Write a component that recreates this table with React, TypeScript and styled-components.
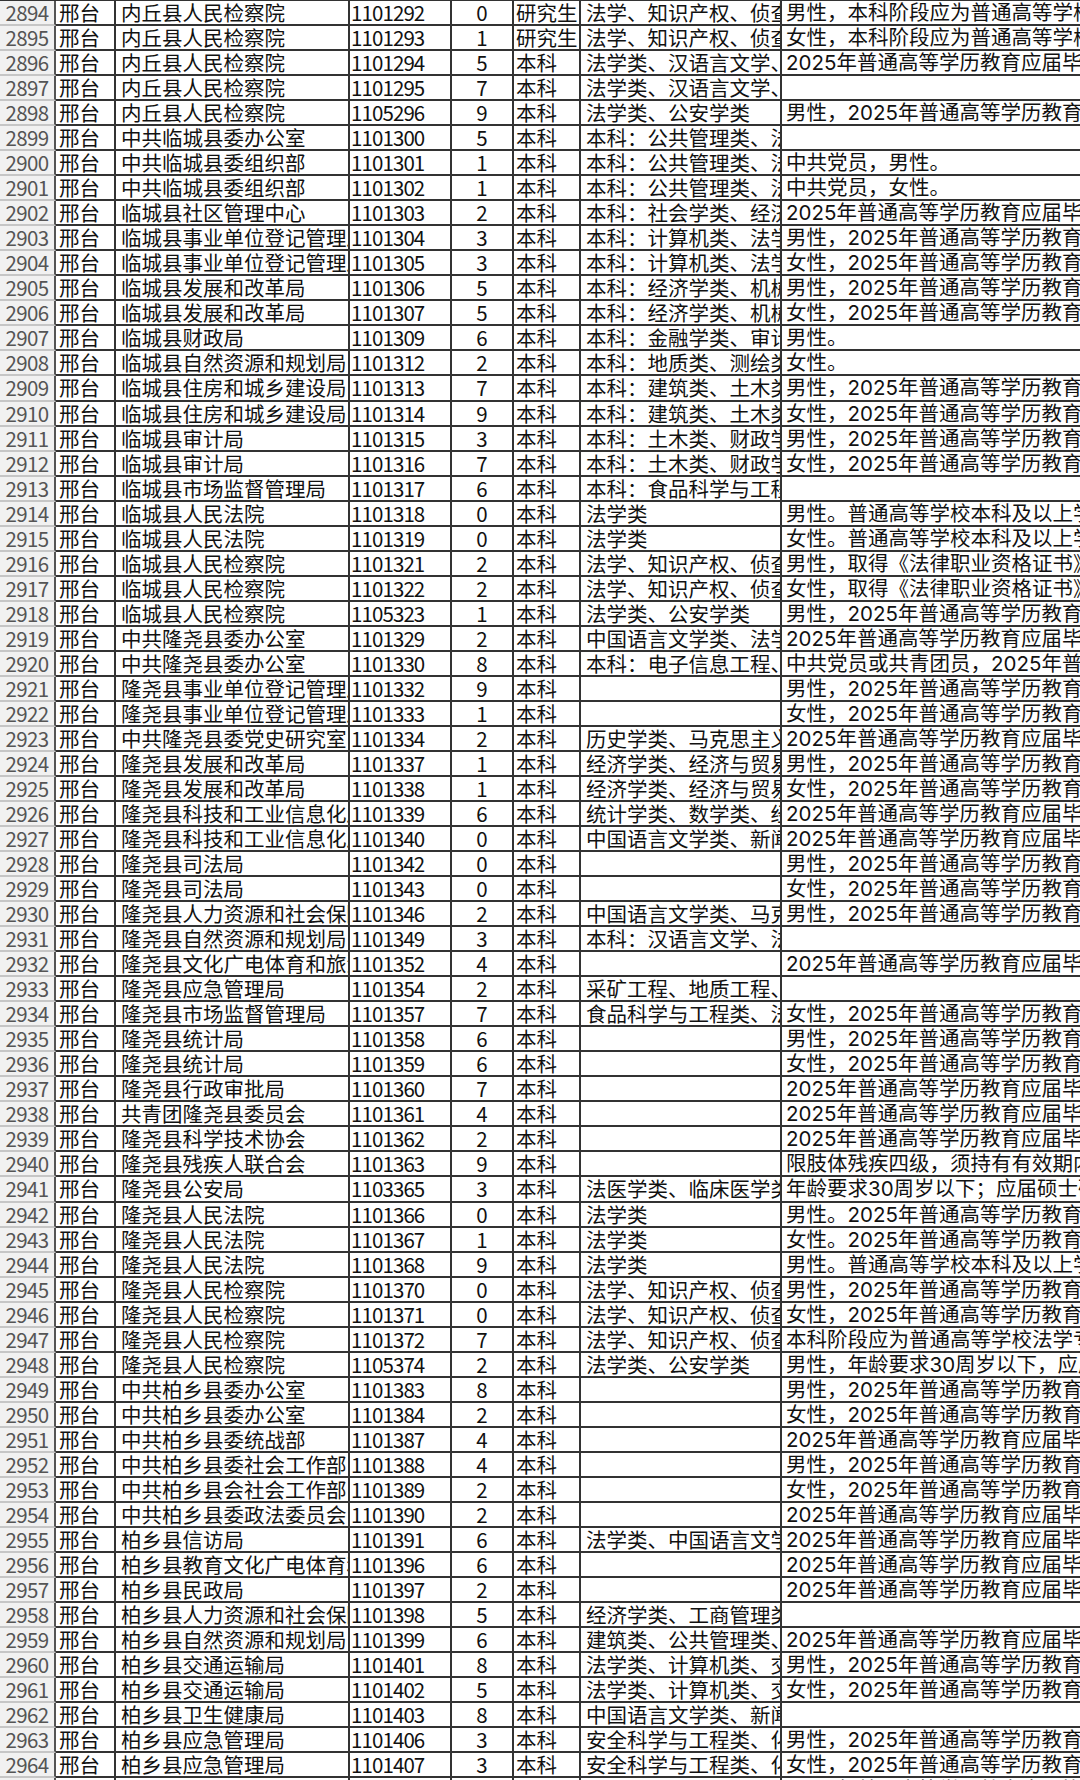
import React from 'react';
import styled, { createGlobalStyle } from 'styled-components';

const GlobalStyle = createGlobalStyle`
  html, body {
    margin: 0;
    padding: 0;
    background: #fff;
  }
  body {
    font-family: "Noto Sans CJK SC", "Noto Sans", sans-serif;
    overflow: hidden;
  }
`;

const Sheet = styled.div`
  width: 1080px;
  height: 1780px;
  overflow: hidden;
  border-top: 1px solid #333;
  box-sizing: border-box;
`;

const Row = styled.div`
  display: grid;
  grid-template-columns: 56px 60px 234px 102px 62px 67px 201px 440px;
  height: 25.04px;
`;

const Cell = styled.div<{ $align?: 'left' | 'center'; $pad?: number; $latin?: boolean; $tight?: boolean }>`
  box-sizing: border-box;
  border-right: 2px solid #333;
  border-bottom: 2px solid #333;
  overflow: hidden;
  white-space: nowrap;
  font-family: ${(p) => (p.$latin ? 'Inter, "Noto Sans CJK SC", sans-serif' : 'inherit')};
  font-size: 20.5px;
  line-height: 23px;
  color: #111;
  text-align: ${(p) => p.$align || 'left'};
  padding-left: ${(p) => (p.$pad ?? 4)}px;
  letter-spacing: ${(p) => (p.$tight ? '-0.9px' : '0')};
`;

const RowHead = styled.div`
  box-sizing: border-box;
  background: #f1f1f1;
  border-right: 2px solid #555;
  border-bottom: 2px solid #c6c6c6;
  color: #555;
  font-size: 20.5px;
  line-height: 23px;
  text-align: center;
  letter-spacing: -0.6px;
  overflow: hidden;
  white-space: nowrap;
`;

interface Job {
  no: number;
  dept: string;
  code: string;
  count: string;
  edu: string;
  major: string;
  note: string;
}

const M = '男性，2025年普通高等学历教育应届毕业生';
const F = '女性，2025年普通高等学历教育应届毕业生';
const G = '2025年普通高等学历教育应届毕业生';

const jf = '法学、知识产权、侦查学类';

const raw: [string, string, string, string, string, string][] = [
  ['内丘县人民检察院', '1101292', '0', '研究生', jf, '男性，本科阶段应为普通高等学校法学'],
  ['内丘县人民检察院', '1101293', '1', '研究生', jf, '女性，本科阶段应为普通高等学校法学'],
  ['内丘县人民检察院', '1101294', '5', '本科', '法学类、汉语言文学、新闻学', G],
  ['内丘县人民检察院', '1101295', '7', '本科', '法学类、汉语言文学、新闻学', ''],
  ['内丘县人民检察院', '1105296', '9', '本科', '法学类、公安学类', M],
  ['中共临城县委办公室', '1101300', '5', '本科', '本科：公共管理类、法学类', ''],
  ['中共临城县委组织部', '1101301', '1', '本科', '本科：公共管理类、法学类', '中共党员，男性。'],
  ['中共临城县委组织部', '1101302', '1', '本科', '本科：公共管理类、法学类', '中共党员，女性。'],
  ['临城县社区管理中心', '1101303', '2', '本科', '本科：社会学类、经济学类', G],
  ['临城县事业单位登记管理局', '1101304', '3', '本科', '本科：计算机类、法学类', M],
  ['临城县事业单位登记管理局', '1101305', '3', '本科', '本科：计算机类、法学类', F],
  ['临城县发展和改革局', '1101306', '5', '本科', '本科：经济学类、机械类', M],
  ['临城县发展和改革局', '1101307', '5', '本科', '本科：经济学类、机械类', F],
  ['临城县财政局', '1101309', '6', '本科', '本科：金融学类、审计学类', '男性。'],
  ['临城县自然资源和规划局', '1101312', '2', '本科', '本科：地质类、测绘类', '女性。'],
  ['临城县住房和城乡建设局', '1101313', '7', '本科', '本科：建筑类、土木类', M],
  ['临城县住房和城乡建设局', '1101314', '9', '本科', '本科：建筑类、土木类', F],
  ['临城县审计局', '1101315', '3', '本科', '本科：土木类、财政学类', M],
  ['临城县审计局', '1101316', '7', '本科', '本科：土木类、财政学类', F],
  ['临城县市场监督管理局', '1101317', '6', '本科', '本科：食品科学与工程类', ''],
  ['临城县人民法院', '1101318', '0', '本科', '法学类', '男性。普通高等学校本科及以上学历'],
  ['临城县人民法院', '1101319', '0', '本科', '法学类', '女性。普通高等学校本科及以上学历'],
  ['临城县人民检察院', '1101321', '2', '本科', jf, '男性，取得《法律职业资格证书》'],
  ['临城县人民检察院', '1101322', '2', '本科', jf, '女性，取得《法律职业资格证书》'],
  ['临城县人民检察院', '1105323', '1', '本科', '法学类、公安学类', M],
  ['中共隆尧县委办公室', '1101329', '2', '本科', '中国语言文学类、法学类', G],
  ['中共隆尧县委办公室', '1101330', '8', '本科', '本科：电子信息工程、计算机', '中共党员或共青团员，2025年普通高等'],
  ['隆尧县事业单位登记管理局', '1101332', '9', '本科', '', M],
  ['隆尧县事业单位登记管理局', '1101333', '1', '本科', '', F],
  ['中共隆尧县委党史研究室', '1101334', '2', '本科', '历史学类、马克思主义理论类', G],
  ['隆尧县发展和改革局', '1101337', '1', '本科', '经济学类、经济与贸易类', M],
  ['隆尧县发展和改革局', '1101338', '1', '本科', '经济学类、经济与贸易类', F],
  ['隆尧县科技和工业信息化局', '1101339', '6', '本科', '统计学类、数学类、经济学类', G],
  ['隆尧县科技和工业信息化局', '1101340', '0', '本科', '中国语言文学类、新闻传播学类', G],
  ['隆尧县司法局', '1101342', '0', '本科', '', M],
  ['隆尧县司法局', '1101343', '0', '本科', '', F],
  ['隆尧县人力资源和社会保障局', '1101346', '2', '本科', '中国语言文学类、马克思主义', M],
  ['隆尧县自然资源和规划局', '1101349', '3', '本科', '本科：汉语言文学、法学', ''],
  ['隆尧县文化广电体育和旅游局', '1101352', '4', '本科', '', G],
  ['隆尧县应急管理局', '1101354', '2', '本科', '采矿工程、地质工程、安全工程', ''],
  ['隆尧县市场监督管理局', '1101357', '7', '本科', '食品科学与工程类、法学类', F],
  ['隆尧县统计局', '1101358', '6', '本科', '', M],
  ['隆尧县统计局', '1101359', '6', '本科', '', F],
  ['隆尧县行政审批局', '1101360', '7', '本科', '', G],
  ['共青团隆尧县委员会', '1101361', '4', '本科', '', G],
  ['隆尧县科学技术协会', '1101362', '2', '本科', '', G],
  ['隆尧县残疾人联合会', '1101363', '9', '本科', '', '限肢体残疾四级，须持有有效期内残疾人证'],
  ['隆尧县公安局', '1103365', '3', '本科', '法医学类、临床医学类', '年龄要求30周岁以下；应届硕士研究生'],
  ['隆尧县人民法院', '1101366', '0', '本科', '法学类', '男性。2025年普通高等学历教育应届毕业生'],
  ['隆尧县人民法院', '1101367', '1', '本科', '法学类', '女性。2025年普通高等学历教育应届毕业生'],
  ['隆尧县人民法院', '1101368', '9', '本科', '法学类', '男性。普通高等学校本科及以上学历'],
  ['隆尧县人民检察院', '1101370', '0', '本科', jf, M],
  ['隆尧县人民检察院', '1101371', '0', '本科', jf, F],
  ['隆尧县人民检察院', '1101372', '7', '本科', jf, '本科阶段应为普通高等学校法学专业'],
  ['隆尧县人民检察院', '1105374', '2', '本科', '法学类、公安学类', '男性，年龄要求30周岁以下，应届毕业生'],
  ['中共柏乡县委办公室', '1101383', '8', '本科', '', M],
  ['中共柏乡县委办公室', '1101384', '2', '本科', '', F],
  ['中共柏乡县委统战部', '1101387', '4', '本科', '', G],
  ['中共柏乡县委社会工作部', '1101388', '4', '本科', '', M],
  ['中共柏乡县会社会工作部', '1101389', '2', '本科', '', F],
  ['中共柏乡县委政法委员会', '1101390', '2', '本科', '', G],
  ['柏乡县信访局', '1101391', '6', '本科', '法学类、中国语言文学类', G],
  ['柏乡县教育文化广电体育和旅游局', '1101396', '6', '本科', '', G],
  ['柏乡县民政局', '1101397', '2', '本科', '', G],
  ['柏乡县人力资源和社会保障局', '1101398', '5', '本科', '经济学类、工商管理类', ''],
  ['柏乡县自然资源和规划局', '1101399', '6', '本科', '建筑类、公共管理类、土木类', G],
  ['柏乡县交通运输局', '1101401', '8', '本科', '法学类、计算机类、交通运输类', M],
  ['柏乡县交通运输局', '1101402', '5', '本科', '法学类、计算机类、交通运输类', F],
  ['柏乡县卫生健康局', '1101403', '8', '本科', '中国语言文学类、新闻传播学类', ''],
  ['柏乡县应急管理局', '1101406', '3', '本科', '安全科学与工程类、化工与制药类', M],
  ['柏乡县应急管理局', '1101407', '3', '本科', '安全科学与工程类、化工与制药类', F],
  ['柏乡县市场监督管理局', '1101408', '2', '本科', '食品科学与工程类、法学类', G],
];

const jobs: Job[] = raw.map((r, i) => ({
  no: 2894 + i,
  dept: r[0],
  code: r[1],
  count: r[2],
  edu: r[3],
  major: r[4],
  note: r[5],
}));

function App() {
  return (
    <>
      <GlobalStyle />
      <Sheet>
        {jobs.map((job) => (
          <Row key={job.no}>
            <RowHead>{job.no}</RowHead>
            <Cell $pad={3}>邢台</Cell>
            <Cell $pad={5}>{job.dept}</Cell>
            <Cell $pad={1} $tight>{job.code}</Cell>
            <Cell $align="center" $pad={0}>{job.count}</Cell>
            <Cell $pad={2}>{job.edu}</Cell>
            <Cell $pad={5}>{job.major}</Cell>
            <Cell $pad={4} $latin>{job.note}</Cell>
          </Row>
        ))}
      </Sheet>
    </>
  );
}

export default App;
